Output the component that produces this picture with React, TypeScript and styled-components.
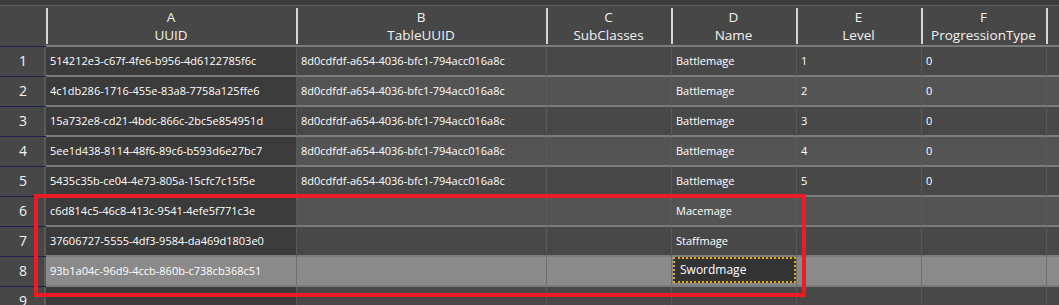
import { createGlobalStyle, styled } from 'styled-components'

interface Record {
  uuid: string
  table: string
  name: string
  level: string
  progression: string
}

const RECORDS: Record[] = [
  { uuid: '514212e3-c67f-4fe6-b956-4d6122785f6c', table: '8d0cdfdf-a654-4036-bfc1-794acc016a8c', name: 'Battlemage', level: '1', progression: '0' },
  { uuid: '4c1db286-1716-455e-83a8-7758a125ffe6', table: '8d0cdfdf-a654-4036-bfc1-794acc016a8c', name: 'Battlemage', level: '2', progression: '0' },
  { uuid: '15a732e8-cd21-4bdc-866c-2bc5e854951d', table: '8d0cdfdf-a654-4036-bfc1-794acc016a8c', name: 'Battlemage', level: '3', progression: '0' },
  { uuid: '5ee1d438-8114-48f6-89c6-b593d6e27bc7', table: '8d0cdfdf-a654-4036-bfc1-794acc016a8c', name: 'Battlemage', level: '4', progression: '0' },
  { uuid: '5435c35b-ce04-4e73-805a-15cfc7c15f5e', table: '8d0cdfdf-a654-4036-bfc1-794acc016a8c', name: 'Battlemage', level: '5', progression: '0' },
  { uuid: 'c6d814c5-46c8-413c-9541-4efe5f771c3e', table: '', name: 'Macemage', level: '', progression: '' },
  { uuid: '37606727-5555-4df3-9584-da469d1803e0', table: '', name: 'Staffmage', level: '', progression: '' },
  { uuid: '93b1a04c-96d9-4ccb-860b-c738cb368c51', table: '', name: 'Swordmage', level: '', progression: '' },
  { uuid: '', table: '', name: '', level: '', progression: '' },
]

const COLUMNS = [
  { letter: 'A', title: 'UUID' },
  { letter: 'B', title: 'TableUUID' },
  { letter: 'C', title: 'SubClasses' },
  { letter: 'D', title: 'Name' },
  { letter: 'E', title: 'Level' },
  { letter: 'F', title: 'ProgressionType' },
  { letter: '', title: '' },
]

const SELECTED = 7
const GRID = '46px 250px 250px 125px 125px 125px 125px 1fr'

const GlobalStyle = createGlobalStyle`
  html, body {
    margin: 0;
    padding: 0;
    background: #474747;
    overflow: hidden;
  }
  body {
    font-family: 'Open Sans', 'Noto Sans', sans-serif;
    color: #ffffff;
  }
`

const Sheet = styled.div`
  position: relative;
  width: 1059px;
  height: 305px;
  overflow: hidden;
  background: #474747;
`

const TopStrip = styled.div`
  height: 5px;
  background: #3c3c3c;
  border-bottom: 1px solid #5c5c5c;
`

const HeaderRow = styled.div`
  display: grid;
  grid-template-columns: ${GRID};
  height: 41px;
`

const Corner = styled.div`
  border-bottom: 1px solid #1d1d4e;
`

const HeaderCell = styled.div`
  position: relative;
  display: flex;
  flex-direction: column;
  align-items: center;
  justify-content: center;
  padding-top: 1px;
  font-size: 13.5px;
  line-height: 18px;
  color: #f2f2f2;
  border-bottom: 2px solid #7b7b7b;

  &:before {
    content: '';
    position: absolute;
    left: 0;
    top: 2px;
    bottom: 1px;
    width: 2px;
    background: #d6d6d6;
  }
`

const Row = styled.div`
  display: grid;
  grid-template-columns: ${GRID};
  height: 30px;
`

const RowNumber = styled.div`
  display: flex;
  align-items: center;
  justify-content: center;
  padding-bottom: 3px;
  font-size: 14px;
  color: #f4f4f4;
  background: #474747;
  border-bottom: 1px solid #1d1d4e;
  box-shadow: inset -2px 0 0 #5a5a5a;
`

const Cell = styled.div<{ $tone: 'key' | 'odd' | 'even' | 'selected' }>`
  display: flex;
  align-items: center;
  padding: 0 0 1px 4px;
  font-size: 11px;
  white-space: nowrap;
  overflow: hidden;
  border-left: 1px solid ${({ $tone }) => ($tone === 'selected' ? '#6e6e6e' : '#5a5a5a')};
  border-bottom: 2px solid #7b7b7b;
  background: ${({ $tone }) =>
    $tone === 'selected' ? '#8a8a8a' : $tone === 'key' ? '#3b3b3b' : $tone === 'even' ? '#545454' : '#484848'};

  &:first-of-type {
    border-left: none;
  }
`

const EditCell = styled.div`
  display: flex;
  align-items: center;
  margin: 0 0 2px 1px;
  padding: 0 0 1px 5px;
  font-size: 12px;
  background: #333333;
  border: 2px dotted #e2ad00;
`

const Highlight = styled.div`
  position: absolute;
  left: 34px;
  top: 194px;
  width: 764px;
  height: 95px;
  border: 4px solid #ec1c24;
  pointer-events: none;
`

export default function App() {
  return (
    <>
      <GlobalStyle />
      <Sheet>
        <TopStrip />
        <HeaderRow>
          <Corner />
          {COLUMNS.map((col, i) => (
            <HeaderCell key={i}>
              <span>{col.letter}</span>
              <span>{col.title}</span>
            </HeaderCell>
          ))}
        </HeaderRow>

        {RECORDS.map((rec, i) => {
          const selected = i === SELECTED
          const tone = selected ? 'selected' : i % 2 === 1 ? 'even' : 'odd'
          return (
            <Row key={i}>
              <RowNumber>{i + 1}</RowNumber>
              <Cell $tone={selected ? 'selected' : 'key'} style={{ borderLeft: 'none' }}>
                {rec.uuid}
              </Cell>
              <Cell $tone={tone}>{rec.table}</Cell>
              <Cell $tone={tone} />
              {selected ? (
                <Cell $tone={tone} style={{ padding: 0 }}>
                  <EditCell style={{ flex: 1, alignSelf: 'stretch' }}>{rec.name}</EditCell>
                </Cell>
              ) : (
                <Cell $tone={tone}>{rec.name}</Cell>
              )}
              <Cell $tone={tone}>{rec.level}</Cell>
              <Cell $tone={tone}>{rec.progression}</Cell>
              <Cell $tone={tone} />
            </Row>
          )
        })}

        <Highlight />
      </Sheet>
    </>
  )
}
